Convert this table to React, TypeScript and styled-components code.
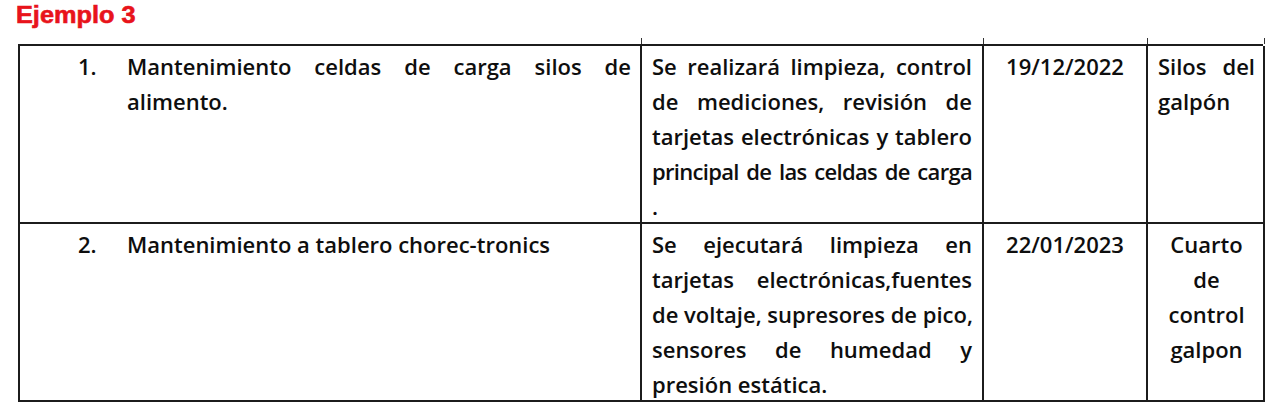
import React from "react";
import styled, { createGlobalStyle } from "styled-components";

const Global = createGlobalStyle`
  html, body { margin: 0; padding: 0; background: #ffffff; }
  body { font-family: "Open Sans", "Liberation Sans", sans-serif; color: #0e0e0e; }
`;

const Page = styled.div`
  width: 1280px;
  height: 412px;
  box-sizing: border-box;
  padding: 1px 0 0 16px;
  background: #ffffff;
  overflow: hidden;
`;

const Title = styled.h1`
  margin: 0;
  font-family: "Liberation Sans", Arial, sans-serif;
  font-weight: 700;
  font-size: 23px;
  line-height: 28px;
  color: #e8131b;
  display: inline-block;
  -webkit-text-stroke: 0.6px #e8131b;
  transform: scaleX(1.1);
  transform-origin: left center;
`;

const Table = styled.div`
  margin: 15px 0 0 2px;
  width: 1245px;
  display: grid;
  grid-template-columns: 622px 342px 164px 117px;
  border-top: 2px solid #1c1c1c;
  border-left: 2px solid #1c1c1c;
  box-sizing: border-box;
`;

const Cell = styled.div<{ $pl: number; $pr: number; $align?: string; $tick?: boolean }>`
  position: relative;
  box-sizing: border-box;
  height: 178px;
  padding: 3px ${(p) => p.$pr}px 0 ${(p) => p.$pl}px;
  border-right: 2px solid #1c1c1c;
  border-bottom: 2px solid #1c1c1c;
  text-align: ${(p) => p.$align || "left"};
  font-size: 22px;
  font-weight: 600;
  line-height: 35px;
  letter-spacing: 0;
  &::after {
    content: "";
    display: ${(p) => (p.$tick ? "block" : "none")};
    position: absolute;
    right: -1.5px;
    top: -8px;
    width: 1px;
    height: 6px;
    background: #333;
  }
`;

const Item = styled.div`
  display: flex;
`;

const Num = styled.span`
  flex: 0 0 49px;
`;

const Lines = styled.div`
  flex: 1;
`;

const Line = styled.div<{ $justify?: boolean; $tight?: boolean }>`
  white-space: nowrap;
  text-align: ${(p) => (p.$justify ? "justify" : "inherit")};
  text-align-last: ${(p) => (p.$justify ? "justify" : "auto")};
  letter-spacing: ${(p) => (p.$tight ? "-0.7px" : "0")};
  word-spacing: ${(p) => (p.$tight ? "-2px" : "0")};
`;

type L = { t: string; j?: boolean; tight?: boolean };

const TextLines = ({ lines }: { lines: L[] }) => (
  <>
    {lines.map((l, i) => (
      <Line key={i} $justify={l.j} $tight={l.tight}>
        {l.t}
      </Line>
    ))}
  </>
);

const rows = [
  {
    num: "1.",
    task: [
      { t: "Mantenimiento celdas de carga silos de", j: true },
      { t: "alimento." },
    ],
    desc: [
      { t: "Se realizará limpieza, control", j: true },
      { t: "de mediciones, revisión de", j: true },
      { t: "tarjetas electrónicas y tablero", j: true },
      { t: "principal de las celdas de carga", j: true, tight: true },
      { t: "." },
    ],
    date: "19/12/2022",
    place: [{ t: "Silos del", j: true }, { t: "galpón" }],
    placeAlign: "left",
  },
  {
    num: "2.",
    task: [{ t: "Mantenimiento a tablero chorec-tronics" }],
    desc: [
      { t: "Se ejecutará limpieza en", j: true },
      { t: "tarjetas electrónicas,fuentes", j: true },
      { t: "de voltaje, supresores de pico,", j: true },
      { t: "sensores de humedad y", j: true },
      { t: "presión estática." },
    ],
    date: "22/01/2023",
    place: [{ t: "Cuarto" }, { t: "de" }, { t: "control" }, { t: "galpon" }],
    placeAlign: "center",
  },
];

export default function App() {
  return (
    <Page>
      <Global />
      <Title>Ejemplo 3</Title>
      <Table>
        {rows.map((r, i) => (
          <React.Fragment key={i}>
            <Cell $pl={58} $pr={9} $tick={i === 0}>
              <Item>
                <Num>{r.num}</Num>
                <Lines>
                  <TextLines lines={r.task} />
                </Lines>
              </Item>
            </Cell>
            <Cell $pl={10} $pr={10} $tick={i === 0}>
              <TextLines lines={r.desc} />
            </Cell>
            <Cell $pl={4} $pr={4} $align="center" $tick={i === 0}>
              <Line>{r.date}</Line>
            </Cell>
            <Cell $pl={10} $pr={8} $align={r.placeAlign} $tick={i === 0}>
              <TextLines lines={r.place} />
            </Cell>
          </React.Fragment>
        ))}
      </Table>
    </Page>
  );
}
